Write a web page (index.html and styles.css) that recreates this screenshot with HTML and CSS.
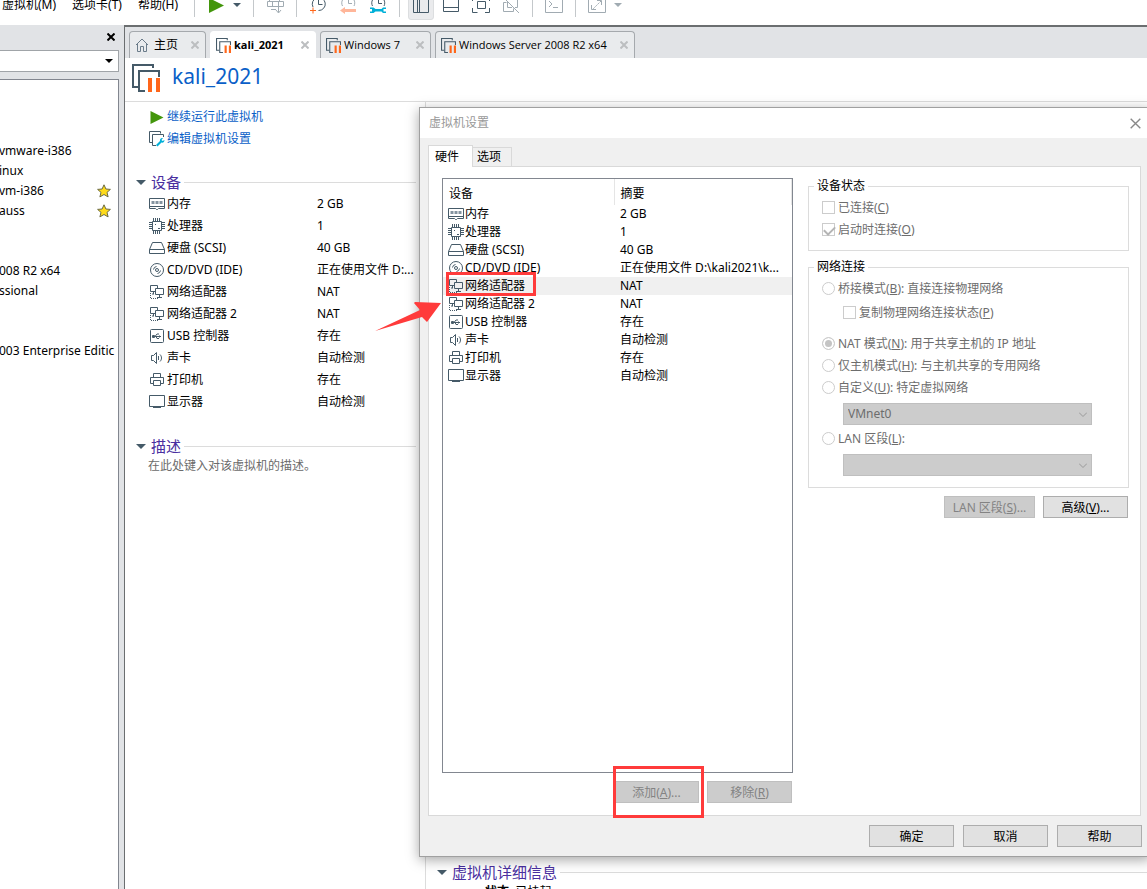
FILE: index.html
```html
<!DOCTYPE html>
<html lang="zh-CN">
<head>
  <meta charset="UTF-8" />
  <meta name="viewport" content="width=device-width, initial-scale=1.0"/>
  <title>kali_2021</title>
  <link rel="stylesheet" href="styles.css">
</head>
<body>
  <svg class="sprite" aria-hidden="true">
    <symbol id="i-memory" viewBox="0 0 16 16"><path d="M.5 2.500h15v10H9.500l-1 1h-1l-1-1H.5zM.5 10.500h15"/><path class="chip" d="M2.500 5h3v3h-3zM6.500 5h3v3h-3zM10.500 5h3v3h-3z"/></symbol>
    <symbol id="i-cpu" viewBox="0 0 16 16"><path d="M3.500 3.500h9v9h-9z"/><path d="M4.500 0v3M6.500 0v3M8.500 0v3M10.500 0v3M4.500 13v3M6.500 13v3M8.500 13v3M10.500 13v3M0 4.500h3M0 6.500h3M0 8.500h3M0 10.500h3M13 4.500h3M13 6.500h3M13 8.500h3M13 10.500h3M6 6.500h1M9 10.500h2"/></symbol>
    <symbol id="i-disk" viewBox="0 0 16 16"><path d="M3.500 2.500h9l3 7v4H.5v-4zM.5 9.500h15"/></symbol>
    <symbol id="i-cd" viewBox="0 0 16 16"><circle cx="8" cy="8" r="6.500"/><circle cx="8" cy="8" r="1.500"/><path d="M4.500 7.500a3.500 3.500 0 0 1 3-3M11.500 8.500a3.500 3.500 0 0 1-3 3"/></symbol>
    <symbol id="i-net" viewBox="0 0 16 16"><path d="M6 7.500H1.500v-6h7v3M6.500 4.500h8v6h-8zM10.500 11v2M8 13.500h5M4.500 8v2M3 10h2"/><path stroke-dasharray="1 1" d="M1.500 9v5.500H10"/></symbol>
    <symbol id="i-usb" viewBox="0 0 16 16"><rect x="1.500" y="1.500" width="13" height="13" rx="1"/><path d="M4 8.500h8M6 8.500l2-2.500h2M7 8.500l1 2h2M10.500 7.500v2"/><path d="M3.500 7.500h2v2h-2z"/></symbol>
    <symbol id="i-sound" viewBox="0 0 16 16"><path d="M2.500 5.500h2l3-3v11l-3-3h-2zM9.500 6v4M11 4.500c2 2 2 5 0 7"/></symbol>
    <symbol id="i-printer" viewBox="0 0 16 16"><path d="M4.500 5.500v-4h7v4M4.500 11.500h-3v-6h13v6h-3M4.500 8.500h7v5h-7z"/></symbol>
    <symbol id="i-display" viewBox="0 0 16 16"><path d="M.5 1.500h15v11H.5zM4 13.500h8"/></symbol>
    <symbol id="i-vm" viewBox="0 0 28 28"><path class="thick" d="M6 23H1V1h20v3"/><path class="thick" d="M13 27H7V7h20v6"/><path class="bar" d="M16 14h4v14h-4zM24 14h4v14h-4z"/></symbol>
    <symbol id="i-clock" viewBox="0 0 18 18"><path d="M3.500 10A6.500 6.500 0 1 1 15 10M9.500 3.500v4h3.500"/></symbol>
    <symbol id="i-x" viewBox="0 0 8 8"><path d="M.5.5l7 7M7.500.5l-7 7"/></symbol>
    <symbol id="i-star" viewBox="0 0 14 14"><path d="M7 .8l1.900 4.200 4.500.4-3.400 3 1.100 4.500L7 10.500l-4.100 2.400L4 8.400.6 5.400 5.100 5z"/></symbol>
    <symbol id="i-play" viewBox="0 0 14 14"><path d="M0 0l14 7-14 7z"/></symbol>
    <symbol id="i-caret" viewBox="0 0 8 4"><path d="M0 0h8L4 4z"/></symbol>
  </svg>

  <div class="app">
    <header class="menu-bar">
      <nav class="menus">
        <button>虚拟机(M)</button>
        <button>选项卡(T)</button>
        <button>帮助(H)</button>
      </nav>
      <div class="toolbar">
        <span class="sep"></span>
        <button class="tool" aria-label="继续运行"><svg class="play"><use href="#i-play"/></svg></button>
        <button class="drop" aria-label="电源选项"><svg class="caret"><use href="#i-caret"/></svg></button>
        <span class="sep"></span>
        <button class="tool faded" aria-label="发送"><svg class="icon-18" viewBox="0 0 18 18"><path d="M3.500 5V1h10v4M1.500 5.500h16v5h-16zM6.500 5.500v5M12.500 5.500v11M10 14l2.500 3 2.500-3M5 13.500h5"/></svg></button>
        <span class="sep"></span>
        <button class="tool" aria-label="拍摄快照"><svg class="icon-18" viewBox="0 0 18 18"><path d="M4 11A6.500 6.500 0 1 1 9.500 14.500M9.500 3.500v5h4"/><path class="orange" d="M1 14.500h6M4 11.500v6"/></svg></button>
        <button class="tool" aria-label="恢复快照"><svg class="icon-18 pale" viewBox="0 0 18 18"><use href="#i-clock"/><path class="salmon" d="M1 14.500l5-3.500v2h11v3H6v2z"/></svg></button>
        <button class="tool" aria-label="管理快照"><svg class="icon-18" viewBox="0 0 18 18"><use href="#i-clock"/><path class="cyan" d="M1 11.500h3.500l2 1.500h6l1.500-1.500h3v1.500h-2.500v2.500H17V17h-3l-1.500-1.500h-6L4.500 17H1v-1.500h2v-2.500H1z"/></svg></button>
        <span class="sep"></span>
        <button class="tool pressed" aria-label="显示库"><svg class="icon-18" viewBox="0 0 18 18"><path d="M1.500 1v15.500h15V1M5.500 1v15M7.500 1v15"/></svg></button>
        <button class="tool" aria-label="缩略图栏"><svg class="icon-18" viewBox="0 0 18 18"><path d="M1.500 1v14.500h15V1M1.500 11.500h15"/></svg></button>
        <button class="tool" aria-label="全屏"><svg class="icon-18" viewBox="0 0 18 18"><path d="M5.500 5.500h8v7h-8zM.5 12v4.500h5M13 16.500h4.500V12M.5 5V1.500h5M13 1.500h4.500V5"/></svg></button>
        <button class="tool faded" aria-label="Unity"><svg class="icon-18" viewBox="0 0 18 18"><path d="M1 1l16 16M4.500 6.500h-3v9h10v-3M7 1.500h8.500v10H13M5.500 6v5.500H10"/></svg></button>
        <span class="sep"></span>
        <button class="tool faded" aria-label="控制台"><svg class="icon-18" viewBox="0 0 18 18"><path d="M.5.5h17v16H.5zM4 5l3 3-3 3M8 11.500h5"/></svg></button>
        <span class="sep"></span>
        <button class="tool faded" aria-label="拉伸"><svg class="icon-18" viewBox="0 0 18 18"><path d="M.5.5h17v16H.5zM9 4.500h4.500V9M3.500 9v4.500H8"/><path stroke-dasharray="2 1" d="M13 5l-9 9"/></svg></button>
        <button class="drop faded" aria-label="拉伸选项"><svg class="caret"><use href="#i-caret"/></svg></button>
      </div>
    </header>

    <div class="workspace">
      <aside class="library">
        <div class="library-head"><button class="library-close" aria-label="关闭"><svg><use href="#i-x"/></svg></button></div>
        <button class="library-search" aria-label="搜索"><svg class="caret"><use href="#i-caret"/></svg></button>
        <ul class="tree">
          <li>vmware-i386</li>
          <li>inux</li>
          <li>vm-i386 <svg class="star"><use href="#i-star"/></svg></li>
          <li>auss <svg class="star"><use href="#i-star"/></svg></li>
          <li></li>
          <li></li>
          <li>008 R2 x64</li>
          <li>ssional</li>
          <li></li>
          <li></li>
          <li>003 Enterprise Editic</li>
        </ul>
      </aside>

      <main class="main">
        <div class="tabs">
          <div class="tab home">
            <svg class="house" viewBox="0 0 14 14"><path d="M1 7l6-6 6 6M2.500 6v7.500h3V8.500h3v5h3V6"/></svg>
            <span>主页</span><svg class="tab-x"><use href="#i-x"/></svg>
          </div>
          <div class="tab active"><svg class="vm"><use href="#i-vm"/></svg><span>kali_2021</span><svg class="tab-x"><use href="#i-x"/></svg></div>
          <div class="tab"><svg class="vm"><use href="#i-vm"/></svg><span>Windows 7</span><svg class="tab-x"><use href="#i-x"/></svg></div>
          <div class="tab wide"><svg class="vm"><use href="#i-vm"/></svg><span>Windows Server 2008 R2 x64</span><svg class="tab-x"><use href="#i-x"/></svg></div>
        </div>
        <div class="vm-title"><svg><use href="#i-vm"/></svg><h1>kali_2021</h1></div>

        <div class="summary">
          <div class="summary-left">
            <div class="actions">
              <a href="#"><svg class="play-small"><use href="#i-play"/></svg>继续运行此虚拟机</a>
              <a href="#"><svg class="icon" viewBox="0 0 16 16"><path d="M3.500 11.500h-3v-11h11v2M7 14.500H3.500v-11h11V6"/><path class="cyan" d="M7 14l4-4c-.5-2 1-3.500 3-3l-1.500 2 1 1 2-1c0 2-1.500 3-3 2.500l-4 4z"/></svg>编辑虚拟机设置</a>
            </div>
            <h2><svg class="caret"><use href="#i-caret"/></svg>设备</h2>
            <table class="devices">
              <tr><td><svg class="icon"><use href="#i-memory"/></svg>内存</td><td>2 GB</td></tr>
              <tr><td><svg class="icon"><use href="#i-cpu"/></svg>处理器</td><td>1</td></tr>
              <tr><td><svg class="icon"><use href="#i-disk"/></svg>硬盘 (SCSI)</td><td>40 GB</td></tr>
              <tr><td><svg class="icon"><use href="#i-cd"/></svg>CD/DVD (IDE)</td><td>正在使用文件 D:...</td></tr>
              <tr><td><svg class="icon"><use href="#i-net"/></svg>网络适配器</td><td>NAT</td></tr>
              <tr><td><svg class="icon"><use href="#i-net"/></svg>网络适配器 2</td><td>NAT</td></tr>
              <tr><td><svg class="icon"><use href="#i-usb"/></svg>USB 控制器</td><td>存在</td></tr>
              <tr><td><svg class="icon"><use href="#i-sound"/></svg>声卡</td><td>自动检测</td></tr>
              <tr><td><svg class="icon"><use href="#i-printer"/></svg>打印机</td><td>存在</td></tr>
              <tr><td><svg class="icon"><use href="#i-display"/></svg>显示器</td><td>自动检测</td></tr>
            </table>
            <h2><svg class="caret"><use href="#i-caret"/></svg>描述</h2>
            <p class="description">在此处键入对该虚拟机的描述。</p>
          </div>
          <div class="summary-right">
            <h2><svg class="caret"><use href="#i-caret"/></svg>虚拟机详细信息</h2>
            <p class="state"><b>状态:</b> 已挂起</p>
          </div>
        </div>
      </main>
    </div>

    <div class="dialog" role="dialog" aria-label="虚拟机设置">
      <div class="dialog-title"><span>虚拟机设置</span><button aria-label="关闭"><svg><use href="#i-x"/></svg></button></div>
      <div class="dialog-tabs">
        <button class="selected">硬件</button>
        <button>选项</button>
      </div>
      <div class="panel">
        <div class="hardware">
          <div class="list-box">
            <table>
              <thead><tr><th>设备</th><th>摘要</th></tr></thead>
              <tbody>
                <tr><td><svg class="icon"><use href="#i-memory"/></svg>内存</td><td>2 GB</td></tr>
                <tr><td><svg class="icon"><use href="#i-cpu"/></svg>处理器</td><td>1</td></tr>
                <tr><td><svg class="icon"><use href="#i-disk"/></svg>硬盘 (SCSI)</td><td>40 GB</td></tr>
                <tr><td><svg class="icon"><use href="#i-cd"/></svg>CD/DVD (IDE)</td><td>正在使用文件 D:\kali2021\k...</td></tr>
                <tr class="current"><td><svg class="icon"><use href="#i-net"/></svg>网络适配器<i class="mark mark-row"></i></td><td>NAT</td></tr>
                <tr><td><svg class="icon"><use href="#i-net"/></svg>网络适配器 2</td><td>NAT</td></tr>
                <tr><td><svg class="icon"><use href="#i-usb"/></svg>USB 控制器</td><td>存在</td></tr>
                <tr><td><svg class="icon"><use href="#i-sound"/></svg>声卡</td><td>自动检测</td></tr>
                <tr><td><svg class="icon"><use href="#i-printer"/></svg>打印机</td><td>存在</td></tr>
                <tr><td><svg class="icon"><use href="#i-display"/></svg>显示器</td><td>自动检测</td></tr>
              </tbody>
            </table>
          </div>
          <div class="buttons">
            <div class="marked"><button class="btn" disabled>添加(<u>A</u>)...</button><i class="mark mark-add"></i></div>
            <button class="btn" disabled>移除(<u>R</u>)</button>
          </div>
        </div>

        <div class="settings">
          <fieldset class="status">
            <legend>设备状态</legend>
            <label><input type="checkbox" disabled>已连接(<u>C</u>)</label>
            <label><input type="checkbox" checked disabled>启动时连接(<u>O</u>)</label>
          </fieldset>
          <fieldset class="network">
            <legend>网络连接</legend>
            <label><input type="radio" name="net" disabled>桥接模式(<u>B</u>): 直接连接物理网络</label>
            <label class="nested"><input type="checkbox" disabled>复制物理网络连接状态(<u>P</u>)</label>
            <label><input type="radio" name="net" checked disabled>NAT 模式(<u>N</u>): 用于共享主机的 IP 地址</label>
            <label><input type="radio" name="net" disabled>仅主机模式(<u>H</u>): 与主机共享的专用网络</label>
            <label><input type="radio" name="net" disabled>自定义(<u>U</u>): 特定虚拟网络</label>
            <div class="select"><select aria-label="特定虚拟网络" disabled><option>VMnet0</option></select><svg viewBox="0 0 8 5"><path d="M0 .5l4 4 4-4"/></svg></div>
            <label><input type="radio" name="net" disabled>LAN 区段(<u>L</u>):</label>
            <div class="select"><select aria-label="LAN 区段" disabled><option></option></select><svg viewBox="0 0 8 5"><path d="M0 .5l4 4 4-4"/></svg></div>
          </fieldset>
          <div class="buttons">
            <button class="btn lan" disabled>LAN 区段(<u>S</u>)...</button>
            <button class="btn">高级(<u>V</u>)...</button>
          </div>
        </div>
      </div>
      <div class="dialog-footer">
        <button class="btn">确定</button>
        <button class="btn">取消</button>
        <button class="btn">帮助</button>
      </div>
    </div>

    <svg class="arrow" viewBox="0 0 66 32"><path d="M0 31L45 10l-6-7 1-1 26 1-14 19-5-5z"/></svg>
  </div>
</body>
</html>
```

FILE: styles.css
```css
* {
  box-sizing: border-box;
}
body {
  margin: 0;
  font-family: "Noto Sans", "Noto Sans CJK SC", sans-serif;
  font-size: 12px;
  line-height: 18px;
  color: #000;
  background: #fff;
}
button, select, input {
  font: inherit;
  color: inherit;
  margin: 0;
  padding: 0;
}
button {
  border: none;
  background: none;
}
svg {
  fill: none;
  stroke: #455a68;
  flex: none;
}
h1, h2, p, ul {
  margin: 0;
  padding: 0;
  font-weight: 400;
}
.sprite {
  position: absolute;
  width: 0;
  height: 0;
}
.app {
  position: relative;
  height: 100vh;
  display: flex;
  flex-direction: column;
  overflow: hidden;
}
.icon {
  width: 16px;
  height: 16px;
}
.icon-18 {
  width: 18px;
  height: 18px;
}
.caret {
  width: 8px;
  height: 4px;
  fill: #455a68;
  stroke: none;
}
.thick {
  stroke-width: 2;
}
.chip {
  fill: #8494a0;
  stroke: none;
}
.bar {
  fill: #ff661a;
  stroke: none;
}
.cyan {
  fill: #00b0d8;
  stroke: none;
}
.orange {
  stroke: #ff661a;
}
.salmon {
  fill: #ff7038;
  stroke: none;
}

/* menu and toolbar */
.menu-bar {
  display: flex;
  align-items: center;
  height: 40px;
  margin-top: -15px;
  flex: none;
}
.menus {
  display: flex;
  gap: 16px;
  padding-left: 2px;
  width: 188px;
  white-space: nowrap;
}
.toolbar {
  display: flex;
  align-items: center;
}
.sep {
  width: 1px;
  height: 24px;
  margin: 0 6px;
  background: #c4c8cb;
}
.tool {
  width: 30px;
  height: 30px;
  display: flex;
  align-items: center;
  justify-content: center;
}
.drop {
  width: 16px;
  display: flex;
  padding-left: 2px;
}
.play {
  width: 15px;
  height: 15px;
  fill: #43960c;
  stroke: none;
}
.faded svg, .pale {
  opacity: 0.5;
}
.pressed {
  background: #eaebed;
  border: 1px solid #dcdee0;
  border-radius: 3px;
  width: 26px;
  margin: 0 2px;
}

/* library */
.workspace {
  display: flex;
  flex: 1;
  min-height: 0;
  background: #e1e3e6;
}
.library {
  width: 119px;
  display: flex;
  flex-direction: column;
  flex: none;
}
.library-head {
  display: flex;
  justify-content: flex-end;
  padding: 8px 4px 9px 0;
}
.library-close {
  display: flex;
  align-items: center;
  height: 8px;
}
.library-close svg {
  width: 8px;
  height: 8px;
  stroke: #000;
  stroke-width: 2;
}
.library-search {
  display: flex;
  align-items: center;
  justify-content: flex-end;
  height: 22px;
  padding-right: 5px;
  background: #fff;
  border: 1px solid #a0a4a8;
  border-left: none;
}
.library-search .caret {
  fill: #000;
}
.tree {
  flex: 1;
  margin-top: 7px;
  padding-top: 61px;
  background: #fff;
  border: 1px solid #82868f;
  border-width: 1px 1px 0 0;
  list-style: none;
  overflow: hidden;
}
.tree li {
  display: flex;
  align-items: center;
  justify-content: space-between;
  height: 20px;
  margin-left: -1px;
  padding-right: 7px;
  white-space: nowrap;
}
.star {
  width: 14px;
  height: 14px;
  fill: #ffdb1a;
  stroke: #6b6b45;
}

/* main area */
.main {
  flex: 1;
  min-width: 0;
  margin-left: 5px;
  display: flex;
  flex-direction: column;
  background: #fff;
  border: 1px solid #6b6e70;
  border-width: 2px 0 0 1px;
}
.tabs {
  display: flex;
  align-items: flex-end;
  gap: 4px;
  height: 31px;
  padding-left: 4px;
  background: #e1e3e6;
}
.tab {
  display: flex;
  align-items: center;
  gap: 3px;
  width: 111px;
  height: 27px;
  padding: 0 6px 0 5px;
  font-family: "Open Sans", "Noto Sans CJK SC", sans-serif;
  font-size: 11px;
  white-space: nowrap;
  background: #e9ebed;
  border: 1px solid #a5a9ad;
  border-bottom: none;
  border-radius: 4px 4px 0 0;
}
.tab.home {
  width: 77px;
  gap: 5px;
  font-size: 12px;
}
.tab.active {
  width: 106px;
  font-weight: 700;
  background: #fff;
  border-color: #fff;
}
.tab.wide {
  width: 200px;
}
.house {
  width: 14px;
  height: 14px;
  stroke: #6b7c8a;
}
.vm {
  width: 15px;
  height: 15px;
}
.tab-x {
  width: 8px;
  height: 8px;
  margin-left: auto;
  stroke: #bcbec0;
  stroke-width: 2;
}
.vm-title {
  display: flex;
  align-items: center;
  gap: 12px;
  height: 44px;
  padding: 0 0 3px 7px;
  border-bottom: 1px solid #dcdcdc;
}
.vm-title svg {
  width: 28px;
  height: 28px;
}
h1 {
  padding-bottom: 3px;
  font-size: 21px;
  line-height: 25px;
  color: #0a5fc8;
}
.summary {
  display: flex;
  flex: 1;
  min-height: 0;
}
.summary-left {
  width: 301px;
  padding: 4px 9px 0 11px;
  border-right: 1px solid #dcdcdc;
  flex: none;
}
.summary-right {
  flex: 1;
  padding: 759px 0 0 11px;
}
.actions {
  padding: 0 0 21px 13px;
}
.actions a {
  display: flex;
  align-items: center;
  gap: 2px;
  height: 22px;
  color: #0a5fc8;
  text-decoration: none;
}
.play-small {
  width: 14px;
  height: 13px;
  margin-right: 1px;
  margin-left: 1px;
  fill: #43960c;
  stroke: none;
}
h2 {
  display: flex;
  align-items: center;
  height: 22px;
  font-size: 15px;
  line-height: 22px;
  color: #4a2fa0;
}
h2 .caret {
  width: 10px;
  height: 5px;
  margin-right: 5px;
}
h2::after {
  content: "";
  flex: 1;
  height: 1px;
  margin-left: 3px;
  background: #dcdcdc;
}
.devices {
  width: 100%;
  margin-bottom: 22px;
  border-collapse: collapse;
  table-layout: fixed;
}
.devices td {
  height: 22px;
  padding: 0;
  white-space: nowrap;
}
.devices td:first-child {
  width: 181px;
  padding-left: 13px;
}
td .icon {
  margin: -2px 2px 0 0;
  vertical-align: middle;
}
.description {
  padding-left: 12px;
  color: #6b6b6b;
}
.state {
  padding-left: 48px;
}

/* settings dialog */
.dialog {
  position: absolute;
  top: 107px;
  right: -4px;
  bottom: 32px;
  left: 419px;
  display: flex;
  flex-direction: column;
  background: #f0f0f0;
  border: 1px solid #a0a0a0;
  box-shadow: 0 3px 12px rgba(0, 0, 0, 0.35);
}
.dialog-title {
  display: flex;
  align-items: center;
  justify-content: space-between;
  height: 30px;
  padding: 0 9px;
  color: #999;
  background: #fff;
}
.dialog-title button {
  display: flex;
}
.dialog-title svg {
  width: 11px;
  height: 11px;
  stroke: #888;
}
.dialog-tabs {
  display: flex;
  align-items: flex-end;
  padding: 7px 0 0 8px;
}
.dialog-tabs button {
  width: 39px;
  height: 19px;
  padding: 0 4px;
  text-align: left;
  border: 1px solid #d9d9d9;
  border-width: 1px 1px 0 0;
}
.dialog-tabs .selected {
  width: 45px;
  height: 22px;
  padding: 0 6px;
  margin-bottom: -1px;
  background: #fff;
  border-left-width: 1px;
  z-index: 1;
}
.panel {
  display: flex;
  gap: 15px;
  flex: 1;
  margin: 0 9px 0 8px;
  padding: 11px 11px 12px 13px;
  background: #fff;
  border: 1px solid #d9d9d9;
}
.hardware {
  display: flex;
  flex-direction: column;
  width: 351px;
}
.list-box {
  flex: 1;
  border: 1px solid #828790;
}
.list-box table {
  width: 100%;
  border-collapse: collapse;
  table-layout: fixed;
}
.list-box th {
  height: 26px;
  padding: 3px 0 0 6px;
  font-weight: 400;
  text-align: left;
  border-right: 1px solid #e5e5e5;
}
.list-box th:first-child {
  width: 171px;
}
.list-box td {
  height: 18px;
  padding: 0 0 0 6px;
  line-height: 16px;
  white-space: nowrap;
}
.list-box td:first-child {
  position: relative;
  padding-left: 5px;
}
.list-box .icon {
  margin-right: 1px;
}
.current {
  background: #f0f0f0;
}
.buttons {
  display: flex;
  justify-content: flex-end;
  gap: 8px;
  padding: 8px 1px 0 0;
}
.btn {
  width: 85px;
  height: 22px;
  padding-top: 1px;
  line-height: 19px;
  text-align: center;
  background: #e1e1e1;
  border: 1px solid #adadad;
}
.btn:disabled {
  color: #838383;
  background: #ccc;
  border-color: #bfbfbf;
}
.btn.lan {
  width: 91px;
}
.settings {
  flex: 1;
}
fieldset {
  margin: 0;
  padding: 4px 13px 0;
  border: 1px solid #dcdcdc;
}
legend {
  padding: 0 3px;
  margin-left: -8px;
  line-height: 16px;
}
fieldset.status {
  height: 73px;
  margin-bottom: 8px;
  padding-top: 3px;
}
fieldset.network {
  height: 229px;
  padding-top: 3px;
}
fieldset label {
  display: flex;
  align-items: center;
  height: 22px;
  color: #6d6d6d;
}
fieldset input {
  appearance: none;
  width: 13px;
  height: 13px;
  margin: 0 3px 1px 0;
  background: #fff;
  border: 1px solid #ccc;
  flex: none;
}
fieldset input[type="radio"] {
  border-radius: 50%;
}
input[type="radio"]:checked {
  background: #c4c4c4;
  box-shadow: inset 0 0 0 2px #fff;
}
input[type="checkbox"]:checked::before {
  content: "";
  display: block;
  width: 9px;
  height: 5px;
  margin: 2px 1px;
  border: solid #b4b4b4;
  border-width: 0 0 2px 2px;
  transform: rotate(-45deg);
}
.network .nested {
  margin: 2px 0 9px 21px;
}
.select {
  position: relative;
  width: 249px;
  margin: 4px 0 3px 21px;
}
.select select {
  display: block;
  appearance: none;
  width: 100%;
  height: 22px;
  padding: 0 4px;
  color: #6d6d6d;
  opacity: 1;
  background: #ccc;
  border: 1px solid #bfbfbf;
  border-radius: 0;
}
.select svg {
  position: absolute;
  top: 9px;
  right: 5px;
  width: 8px;
  height: 5px;
  stroke: #999;
}
.dialog-footer {
  display: flex;
  justify-content: flex-end;
  gap: 9px;
  padding: 9px 8px;
}

/* red markers */
.marked {
  position: relative;
}
.mark {
  position: absolute;
  border: 3px solid #ff3b3b;
}
.mark-row {
  top: -5px;
  left: 3px;
  width: 90px;
  height: 24px;
}
.mark-add {
  top: -15px;
  left: -1px;
  width: 91px;
  height: 52px;
}
.arrow {
  position: absolute;
  top: 300px;
  left: 375px;
  width: 66px;
  height: 32px;
  fill: #ff3b3b;
  stroke: none;
}
```
